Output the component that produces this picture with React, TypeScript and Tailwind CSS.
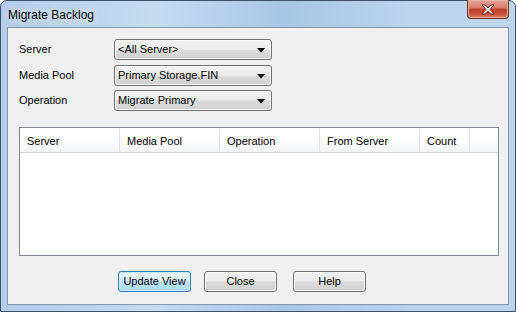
import React from "react";

const font = { fontFamily: '"Liberation Sans", Arial, sans-serif' };

function Combo({ value }: { value: string }) {
  return (
    <div className="relative flex h-[21px] w-[158px] items-center rounded-[3px] border border-[#707070] bg-[linear-gradient(#f2f2f2_0%,#ebebeb_50%,#dddddd_50%,#cfcfcf_100%)] shadow-[inset_0_0_0_1px_#fbfbfb]">
      <span className="pl-[3px] text-[11px] leading-none text-black">{value}</span>
      <svg className="absolute right-[6px] top-[8px]" width="8" height="5" viewBox="0 0 8 5">
        <path d="M0 0 L8 0 L4 4.5 Z" fill="#000" />
      </svg>
    </div>
  );
}

function Btn({ label, primary }: { label: string; primary?: boolean }) {
  return (
    <div
      className={`flex h-[21px] w-[73px] items-center justify-center rounded-[3px] border text-[11px] leading-none text-black ${
        primary
          ? "border-[#3c7fb1] bg-[linear-gradient(#eaf6fd_0%,#d9f0fc_50%,#bee6fd_50%,#a7d9f5_100%)] shadow-[inset_0_0_0_1px_#c8eafc]"
          : "border-[#707070] bg-[linear-gradient(#f2f2f2_0%,#ebebeb_50%,#dddddd_50%,#cfcfcf_100%)] shadow-[inset_0_0_0_1px_#fbfbfb]"
      }`}
    >
      {label}
    </div>
  );
}

const cols = [
  { name: "Server", w: "w-[100px]" },
  { name: "Media Pool", w: "w-[100px]" },
  { name: "Operation", w: "w-[100px]" },
  { name: "From Server", w: "w-[100px]" },
  { name: "Count", w: "w-[50px]" },
];

export default function App() {
  return (
    <div className="h-[312px] w-[516px] overflow-hidden bg-white" style={font}>
      <div className="relative flex h-full w-full flex-col rounded-t-[7px] border border-[#3d5269] bg-[linear-gradient(90deg,#b4cde8_0%,#c6dbf0_30%,#a9c6e6_55%,#bcd4ec_80%,#bcd4ec_100%)] px-[6px] pb-[6px]">
        {/* title bar */}
        <div className="flex h-[26px] shrink-0 items-center">
          <span className="pl-[1px] pt-[2px] text-[12px] text-black [text-shadow:0_0_6px_#ffffff]">
            Migrate Backlog
          </span>
        </div>
        <div className="absolute right-[6px] top-[-1px] flex h-[19px] w-[42px] items-center justify-center rounded-b-[4px] border border-t-0 border-[#6d2a1f] bg-[linear-gradient(#e7a89c_0%,#d87a68_45%,#c0402a_50%,#c9543c_80%,#e08a6a_100%)] shadow-[inset_0_0_0_1px_#eab3a6]">
          <svg width="14" height="11" viewBox="0 0 14 11">
            <path
              d="M1 1 L4.5 1 L7 4 L9.5 1 L13 1 L9 5.5 L13 10 L9.5 10 L7 7 L4.5 10 L1 10 L5 5.5 Z"
              fill="#ffffff"
              stroke="#5a1e14"
              strokeWidth="1"
              strokeLinejoin="round"
            />
          </svg>
        </div>

        {/* client area */}
        <div className="flex flex-1 flex-col border border-[#8397ad] bg-[#f0f0f0] px-[11px] pt-[11px]">
          <div className="flex h-[21px] items-center">
            <span className="w-[95px] text-[11px] leading-none">Server</span>
            <Combo value="<All Server>" />
          </div>
          <div className="mt-[5px] flex h-[21px] items-center">
            <span className="w-[95px] text-[11px] leading-none">Media Pool</span>
            <Combo value="Primary Storage.FIN" />
          </div>
          <div className="mt-[4px] flex h-[21px] items-center">
            <span className="w-[95px] text-[11px] leading-none">Operation</span>
            <Combo value="Migrate Primary" />
          </div>

          {/* list view */}
          <div className="mt-[16px] h-[129px] w-[480px] border border-[#828790] bg-white">
            <div className="flex h-[25px] border-b border-[#d5d5d5] bg-[linear-gradient(#ffffff_0%,#ffffff_40%,#f3f4f6_100%)]">
              {cols.map((c) => (
                <div
                  key={c.name}
                  className={`${c.w} flex items-center border-r border-[#e3e5e8] pl-[7px] pt-[2px] text-[11px] leading-none`}
                >
                  {c.name}
                </div>
              ))}
              <div className="flex-1" />
            </div>
          </div>

          <div className="mt-[15px] flex pl-[99px]">
            <Btn label="Update View" primary />
            <div className="ml-[13px]">
              <Btn label="Close" />
            </div>
            <div className="ml-[16px]">
              <Btn label="Help" />
            </div>
          </div>
        </div>
      </div>
    </div>
  );
}
